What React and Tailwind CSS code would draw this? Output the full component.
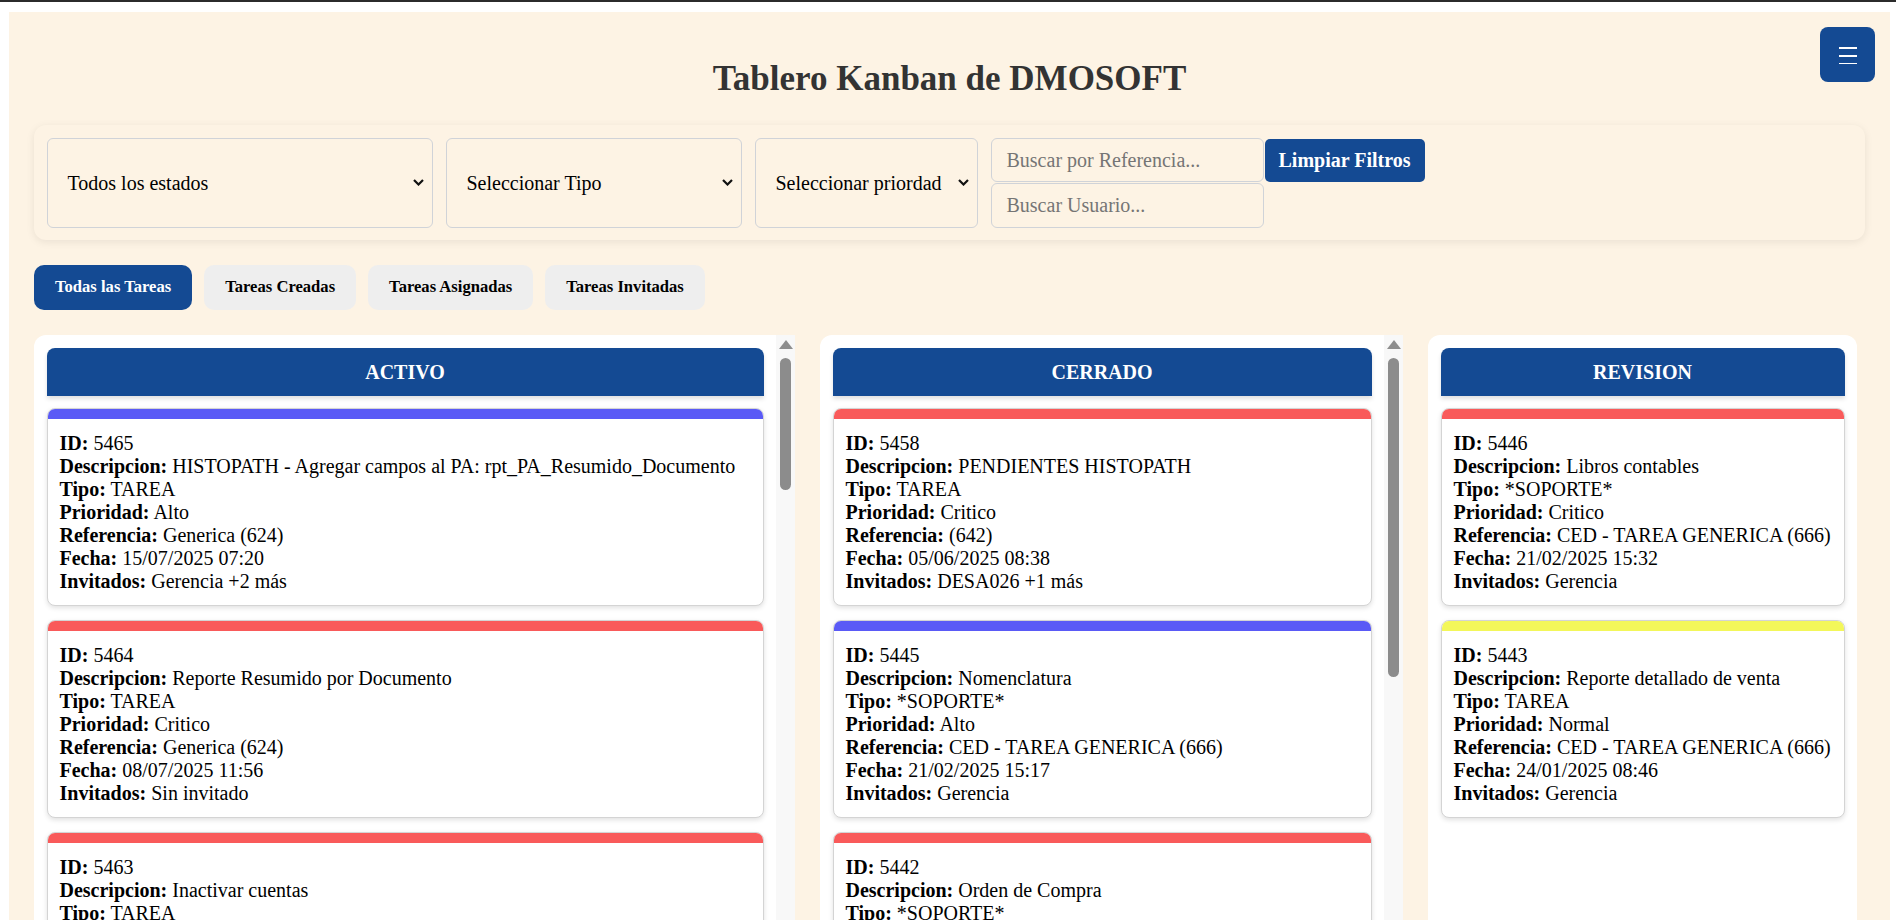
import React from 'react';

const columnas = [
  {
    titulo: 'ACTIVO',
    ancho: 'w-[761px]',
    scroll: 'h-[132px]',
    tareas: [
      { id: 5465, color: 'bg-[#5a5af6]', desc: 'HISTOPATH - Agregar campos al PA: rpt_PA_Resumido_Documento', tipo: 'TAREA', prioridad: 'Alto', ref: 'Generica (624)', fecha: '15/07/2025 07:20', invitados: 'Gerencia +2 más' },
      { id: 5464, color: 'bg-[#f95a5a]', desc: 'Reporte Resumido por Documento', tipo: 'TAREA', prioridad: 'Critico', ref: 'Generica (624)', fecha: '08/07/2025 11:56', invitados: 'Sin invitado' },
      { id: 5463, color: 'bg-[#f95a5a]', desc: 'Inactivar cuentas', tipo: 'TAREA', prioridad: 'Critico', ref: 'Generica (624)', fecha: '01/07/2025 09:12', invitados: 'Sin invitado' },
    ],
  },
  {
    titulo: 'CERRADO',
    ancho: 'w-[583px]',
    scroll: 'h-[319px]',
    tareas: [
      { id: 5458, color: 'bg-[#f95a5a]', desc: 'PENDIENTES HISTOPATH', tipo: 'TAREA', prioridad: 'Critico', ref: '(642)', fecha: '05/06/2025 08:38', invitados: 'DESA026 +1 más' },
      { id: 5445, color: 'bg-[#5a5af6]', desc: 'Nomenclatura', tipo: '*SOPORTE*', prioridad: 'Alto', ref: 'CED - TAREA GENERICA (666)', fecha: '21/02/2025 15:17', invitados: 'Gerencia' },
      { id: 5442, color: 'bg-[#f95a5a]', desc: 'Orden de Compra', tipo: '*SOPORTE*', prioridad: 'Critico', ref: 'CED - TAREA GENERICA (666)', fecha: '20/02/2025 10:05', invitados: 'Gerencia' },
    ],
  },
  {
    titulo: 'REVISION',
    ancho: 'w-[429px]',
    scroll: null,
    tareas: [
      { id: 5446, color: 'bg-[#f95a5a]', desc: 'Libros contables', tipo: '*SOPORTE*', prioridad: 'Critico', ref: 'CED - TAREA GENERICA (666)', fecha: '21/02/2025 15:32', invitados: 'Gerencia' },
      { id: 5443, color: 'bg-[#f3f75a]', desc: 'Reporte detallado de venta', tipo: 'TAREA', prioridad: 'Normal', ref: 'CED - TAREA GENERICA (666)', fecha: '24/01/2025 08:46', invitados: 'Gerencia' },
    ],
  },
];

const Chevron = () => (
  <svg width="11" height="7" viewBox="0 0 11 7" className="shrink-0">
    <polyline points="1,1 5.5,5.5 10,1" fill="none" stroke="#111" strokeWidth="2.2" />
  </svg>
);

const Select = ({ texto, ancho }) => (
  <div className={`${ancho} h-[90px] flex items-center justify-between pl-[20px] pr-[8px] border border-[#d0d3d8] rounded-[6px] text-[20px] text-black`}>
    <span>{texto}</span>
    <Chevron />
  </div>
);

const Tarjeta = ({ t }) => (
  <div className="bg-white border border-[#d4d4d4] rounded-[8px] overflow-hidden shadow-[0_2px_5px_rgba(0,0,0,0.12)] shrink-0">
    <div className={`h-[10px] ${t.color}`}></div>
    <div className="px-[12px] py-[12.5px] text-[20px] leading-[23px] text-black whitespace-nowrap">
      <div><b>ID:</b> {t.id}</div>
      <div><b>Descripcion:</b> {t.desc}</div>
      <div><b>Tipo:</b> {t.tipo}</div>
      <div><b>Prioridad:</b> {t.prioridad}</div>
      <div><b>Referencia:</b> {t.ref}</div>
      <div><b>Fecha:</b> {t.fecha}</div>
      <div><b>Invitados:</b> {t.invitados}</div>
    </div>
  </div>
);

const Columna = ({ col }) => (
  <div className={`${col.ancho} h-[640px] shrink-0 bg-white flex overflow-hidden ${col.scroll ? 'rounded-tl-[12px]' : 'rounded-t-[12px]'}`}>
    <div className="flex-1 min-w-0 pt-[13px] px-[12.5px] flex flex-col">
      <div className="h-[48px] shrink-0 bg-[#144a93] rounded-t-[8px] flex items-center justify-center text-white font-bold text-[20px] shadow-[0_3px_4px_rgba(0,0,0,0.12)]">
        {col.titulo}
      </div>
      <div className="mt-[12px] shrink-0 flex flex-col gap-[14px]">
        {col.tareas.map((t) => <Tarjeta key={t.id} t={t} />)}
      </div>
    </div>
    {col.scroll && (
      <div className="w-[19px] bg-[#f8f8f8] flex flex-col items-center shrink-0">
        <div className="h-[19px] flex items-center justify-center">
          <svg width="14" height="9" viewBox="0 0 14 9"><polygon points="7,0 14,9 0,9" fill="#8e8e8e" /></svg>
        </div>
        <div className={`mt-[4px] w-[11px] ${col.scroll} rounded-full bg-[#8c8c8c]`}></div>
      </div>
    )}
  </div>
);

const App = () => {
  return (
    <div className="min-h-screen bg-white font-['Liberation_Serif',_'Times_New_Roman',_serif]">
      <div className="h-[2px] bg-[#2b2b2b]"></div>
      <div className="pt-[10px] pl-[9px] pr-[6px]">
        <div className="relative bg-[#fdf3e4] px-[25px] pt-[47px] min-h-[920px]">

          {/* Boton menu */}
          <button className="absolute top-[15px] right-[15px] w-[55px] h-[55px] bg-[#144a93] rounded-[8px] flex items-center justify-center">
            <svg width="18" height="18" viewBox="0 0 18 18">
              <rect x="0" y="1" width="18" height="2" fill="white" />
              <rect x="0" y="9" width="18" height="2" fill="white" />
              <rect x="0" y="17" width="18" height="1.6" fill="white" />
            </svg>
          </button>

          <h1 className="text-center text-[35px] leading-[40px] font-bold text-[#333]">Tablero Kanban de DMOSOFT</h1>

          {/* Filtros */}
          <div className="mt-[26px] rounded-[12px] bg-[#fdf3e4] shadow-[0_2px_8px_rgba(0,0,0,0.08)] p-[12.5px] flex items-start gap-[13px]">
            <Select texto="Todos los estados" ancho="w-[386px]" />
            <Select texto="Seleccionar Tipo" ancho="w-[296px]" />
            <Select texto="Seleccionar priordad" ancho="w-[223px]" />
            <div className="flex items-start gap-[1px]">
              <div className="flex flex-col gap-[1px]">
                <div className="w-[273px] h-[44px] border border-[#d0d3d8] rounded-[6px] flex items-center pl-[15px] text-[20px] text-[#757575]">Buscar por Referencia...</div>
                <div className="w-[273px] h-[45px] border border-[#d0d3d8] rounded-[6px] flex items-center pl-[15px] text-[20px] text-[#757575]">Buscar Usuario...</div>
              </div>
              <button className="h-[43px] px-[14px] bg-[#144a93] text-white font-bold text-[20px] rounded-[5px] mt-[1px]">Limpiar Filtros</button>
            </div>
          </div>

          {/* Tabs */}
          <div className="mt-[25px] flex gap-[12px]">
            <button className="h-[45px] px-[21px] rounded-[10px] bg-[#144a93] text-white font-bold text-[16.6px]">Todas las Tareas</button>
            <button className="h-[45px] px-[21px] rounded-[10px] bg-[#eeeeee] text-black font-bold text-[16.6px]">Tareas Creadas</button>
            <button className="h-[45px] px-[21px] rounded-[10px] bg-[#eeeeee] text-black font-bold text-[16.6px]">Tareas Asignadas</button>
            <button className="h-[45px] px-[21px] rounded-[10px] bg-[#eeeeee] text-black font-bold text-[16.6px]">Tareas Invitadas</button>
          </div>

          {/* Columnas */}
          <div className="mt-[25px] flex gap-[25px]">
            {columnas.map((c) => <Columna key={c.titulo} col={c} />)}
          </div>
        </div>
      </div>
    </div>
  );
};

export default App;
